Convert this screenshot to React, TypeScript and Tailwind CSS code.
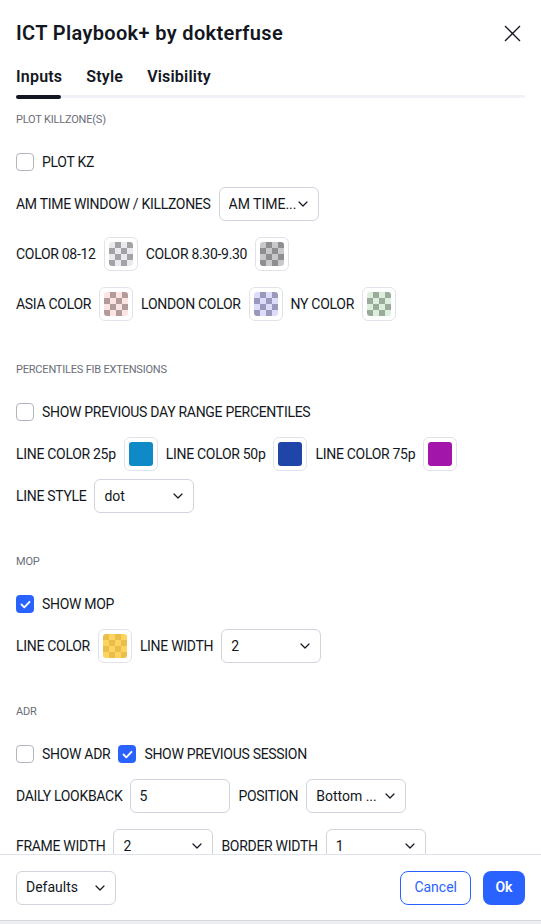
import React from 'react';

const Chevron: React.FC = () => (
    <svg width="10" height="6" viewBox="0 0 10 6" fill="none" className="shrink-0">
        <path d="M1 1l4 4 4-4" stroke="#131722" strokeWidth="1.2" strokeLinecap="round" strokeLinejoin="round" />
    </svg>
);

const Checkbox: React.FC<{ checked?: boolean }> = ({ checked }) =>
    checked ? (
        <span className="w-[18px] h-[18px] rounded-[4px] bg-[#2962ff] flex items-center justify-center shrink-0">
            <svg width="11" height="9" viewBox="0 0 11 9" fill="none">
                <path d="M1.5 4.5l2.8 2.8L9.5 1.8" stroke="#fff" strokeWidth="1.8" strokeLinecap="round" strokeLinejoin="round" />
            </svg>
        </span>
    ) : (
        <span className="w-[18px] h-[18px] rounded-[4px] border border-[#b2b5be] bg-white shrink-0" />
    );

const Select: React.FC<{ value: string; className?: string }> = ({ value, className = 'w-[100px]' }) => (
    <div className={`h-[34px] border border-[#d1d4dc] rounded-md pl-[9px] pr-[10px] flex items-center justify-between text-[14px] tracking-normal text-[#131722] shrink-0 ${className}`}>
        <span className="truncate">{value}</span>
        <Chevron />
    </div>
);

// swatch = button with a 24px checker / solid fill inside
const Swatch: React.FC<{ fill: string }> = ({ fill }) => (
    <div className="w-[34px] h-[34px] border border-[#e0e3eb] rounded-md flex items-center justify-center shrink-0">
        <div className={`w-[24px] h-[24px] rounded-[3px] ${fill}`} />
    </div>
);

const SectionTitle: React.FC<{ children: React.ReactNode; className?: string }> = ({ children, className = '' }) => (
    <div className={`text-[11px] leading-4 tracking-[-0.2px] text-[#6a6d78] uppercase ${className}`}>{children}</div>
);

const Row: React.FC<{ children: React.ReactNode; className?: string }> = ({ children, className = '' }) => (
    <div className={`h-[34px] flex items-center gap-2 text-[14px] tracking-[-0.3px] text-[#131722] whitespace-nowrap ${className}`}>{children}</div>
);

const App: React.FC = () => {
    return (
        <div className="w-[541px] h-[924px] bg-[#eceef2] font-['Roboto',sans-serif]">
            <div className="h-[921px] bg-white border-b border-[#d6d8dd] flex flex-col overflow-hidden">
                {/* Header */}
                <div className="flex items-center justify-between pl-4 pr-5 pt-[19px] h-[47px]">
                    <h1 className="text-[20px] leading-7 font-semibold tracking-[0.35px] text-[#131722]">ICT Playbook+ by dokterfuse</h1>
                    <svg width="17" height="17" viewBox="0 0 17 17" fill="none">
                        <path d="M1 1l15 15M16 1L1 16" stroke="#131722" strokeWidth="1.3" />
                    </svg>
                </div>

                {/* Tabs */}
                <div className="px-4 pt-[20px]">
                    <div className="flex gap-6 text-[16px] leading-5 font-semibold tracking-[0.2px] text-[#131722]">
                        <span>Inputs</span>
                        <span>Style</span>
                        <span>Visibility</span>
                    </div>
                    <div className="relative mt-[8px] h-[3px] rounded-full bg-[#f0f2f7]">
                        <div className="absolute left-0 -top-[0.5px] w-[45px] h-[4px] rounded-full bg-[#131722]" />
                    </div>
                </div>

                {/* Inputs */}
                <div className="flex-1 overflow-hidden px-4">
                    <SectionTitle className="mt-[14px]">Plot killzone(s)</SectionTitle>
                    <Row className="mt-[17px]">
                        <Checkbox />
                        <span>PLOT KZ</span>
                    </Row>
                    <Row className="mt-2">
                        <span>AM TIME WINDOW / KILLZONES</span>
                        <Select value="AM TIME..." />
                    </Row>
                    <Row className="mt-4">
                        <span>COLOR 08-12</span>
                        <Swatch fill="bg-[image:repeating-conic-gradient(#a3a3a6_0_25%,#e9eaed_0_50%)] bg-[length:12px_12px]" />
                        <span>COLOR 8.30-9.30</span>
                        <Swatch fill="bg-[image:repeating-conic-gradient(#8e8e90_0_25%,#c8c8ca_0_50%)] bg-[length:12px_12px]" />
                    </Row>
                    <Row className="mt-4">
                        <span>ASIA COLOR</span>
                        <Swatch fill="bg-[image:repeating-conic-gradient(#b29c9b_0_25%,#fbe4e1_0_50%)] bg-[length:12px_12px]" />
                        <span>LONDON COLOR</span>
                        <Swatch fill="bg-[image:repeating-conic-gradient(#9a98bd_0_25%,#dedcfb_0_50%)] bg-[length:12px_12px]" />
                        <span>NY COLOR</span>
                        <Swatch fill="bg-[image:repeating-conic-gradient(#9aab9b_0_25%,#dcefdc_0_50%)] bg-[length:12px_12px]" />
                    </Row>

                    <SectionTitle className="mt-[41px]">Percentiles fib extensions</SectionTitle>
                    <Row className="mt-[17px]">
                        <Checkbox />
                        <span>SHOW PREVIOUS DAY RANGE PERCENTILES</span>
                    </Row>
                    <Row className="mt-2">
                        <span>LINE COLOR 25p</span>
                        <Swatch fill="bg-[#0f8ac7]" />
                        <span>LINE COLOR 50p</span>
                        <Swatch fill="bg-[#1f45a9]" />
                        <span>LINE COLOR 75p</span>
                        <Swatch fill="bg-[#a316aa]" />
                    </Row>
                    <Row className="mt-2">
                        <span>LINE STYLE</span>
                        <Select value="dot" />
                    </Row>

                    <SectionTitle className="mt-[41px]">MOP</SectionTitle>
                    <Row className="mt-[17px]">
                        <Checkbox checked />
                        <span>SHOW MOP</span>
                    </Row>
                    <Row className="mt-2">
                        <span>LINE COLOR</span>
                        <Swatch fill="bg-[image:repeating-conic-gradient(#fdd45e_0_25%,#ebbd4b_0_50%)] bg-[length:12px_12px]" />
                        <span>LINE WIDTH</span>
                        <Select value="2" />
                    </Row>

                    <SectionTitle className="mt-[41px]">ADR</SectionTitle>
                    <Row className="mt-[17px]">
                        <Checkbox />
                        <span>SHOW ADR</span>
                        <Checkbox checked />
                        <span>SHOW PREVIOUS SESSION</span>
                    </Row>
                    <Row className="mt-2">
                        <span>DAILY LOOKBACK</span>
                        <div className="w-[100px] h-[34px] border border-[#d1d4dc] rounded-md px-2 flex items-center tracking-normal">5</div>
                        <span>POSITION</span>
                        <Select value="Bottom ..." />
                    </Row>
                    <Row className="mt-4">
                        <span>FRAME WIDTH</span>
                        <Select value="2" />
                        <span>BORDER WIDTH</span>
                        <Select value="1" />
                    </Row>
                </div>

                {/* Footer */}
                <div className="h-[66px] shrink-0 border-t border-[#e0e3eb] flex items-center justify-between px-4">
                    <Select value="Defaults" className="w-[100px] rounded-lg" />
                    <div className="flex gap-3">
                        <button className="h-[34px] px-[13px] rounded-lg border border-[#2962ff] text-[#2962ff] text-[14px]">Cancel</button>
                        <button className="h-[34px] w-[42px] rounded-lg bg-[#2962ff] text-white text-[14px] font-semibold">Ok</button>
                    </div>
                </div>
            </div>
        </div>
    );
};

export default App;
